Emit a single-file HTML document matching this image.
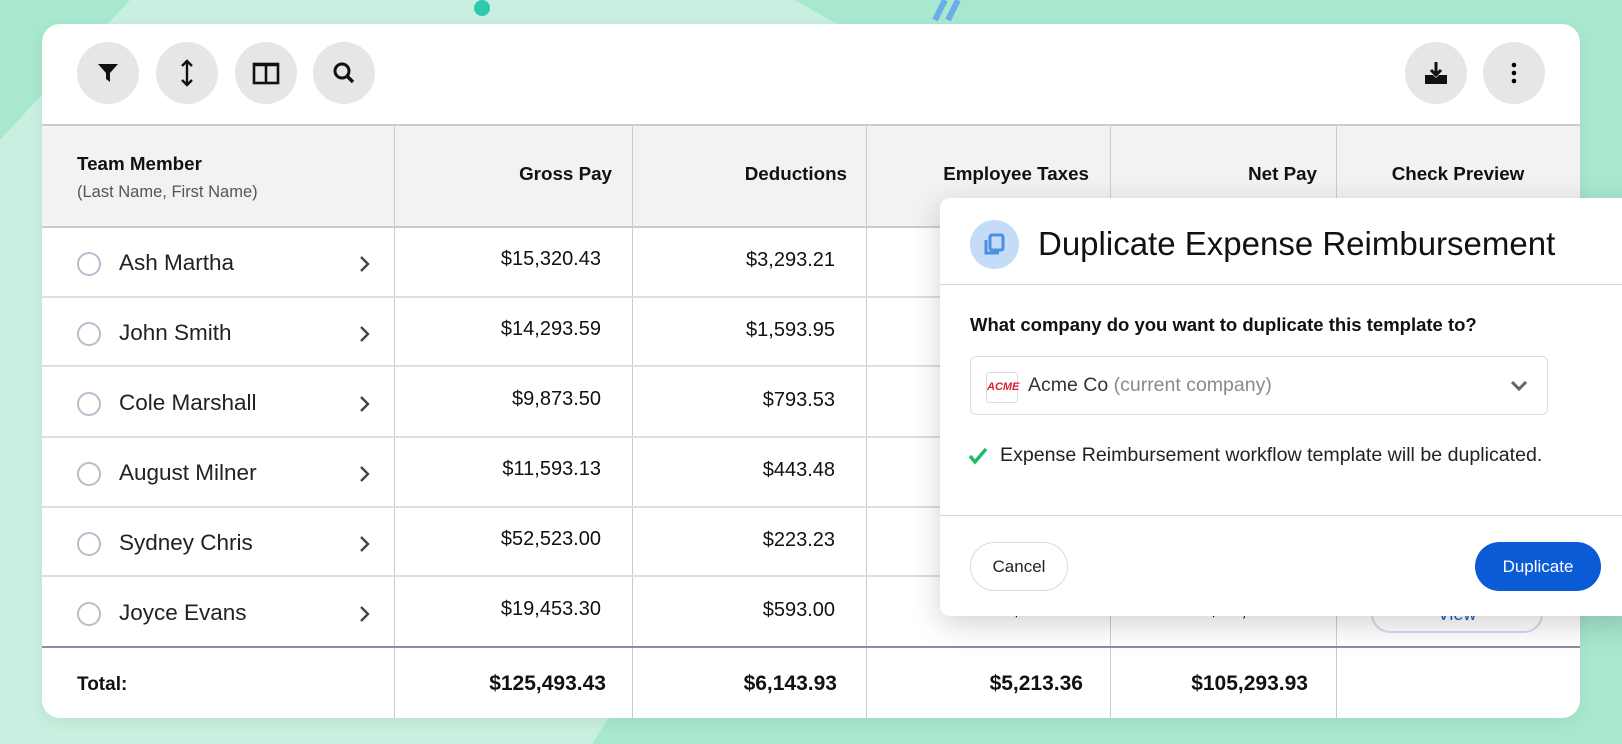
<!DOCTYPE html>
<html><head><meta charset="utf-8"><style>
*{box-sizing:border-box;margin:0;padding:0}
body{width:1622px;height:744px;overflow:hidden;position:relative;background:#a8e8cf;font-family:"Liberation Sans",sans-serif;color:#111}
.abs{position:absolute}
.card{left:42px;top:24px;width:1538px;height:694px;background:#fff;border-radius:18px;overflow:hidden;box-shadow:0 4px 16px rgba(0,0,0,.06)}
.btn{position:absolute;width:62px;height:62px;border-radius:50%;background:#e6e6e6;top:18px;display:flex;align-items:center;justify-content:center}
.hdr{left:0;top:100px;width:1538px;height:104px;background:#f2f2f3;border-top:2px solid #c9ccd6;border-bottom:2px solid #c9ccd6}
.vl{position:absolute;top:100px;width:1px;height:594px;background:#c9ccd6}
.hl{position:absolute;left:0;width:1538px;height:2px;background:#dcdee4}
.h{position:absolute;font-weight:bold;font-size:18.8px;top:139px}
.r{position:absolute;font-size:20px;text-align:right}
.name{position:absolute;left:77px;font-size:22.5px;color:#222}
.rad{position:absolute;left:35px;width:24px;height:24px;border:2px solid #b9bccb;border-radius:50%}
.chev{position:absolute;left:316px}
.tot{position:absolute;font-size:21px;font-weight:bold;top:648px}
</style></head><body>
<svg class="abs" style="left:0;top:0" width="1622" height="744">
<polygon points="130,0 795,0 900,60 620,700 592,744 0,744 0,140" fill="#c8efdf"/>
<circle cx="482" cy="8" r="8" fill="#2fc9b0"/>
<path d="M935 20 L945 0 M948 20 L958 0" stroke="#6aaee8" stroke-width="6"/>
</svg>
<div class="abs card">
 <div class="btn" style="left:35px"><svg width="24" height="24" viewBox="0 0 24 24"><path d="M2 3h20l-8 9v9l-4-3v-6z" fill="#111"/></svg></div>
 <div class="btn" style="left:114px"><svg width="24" height="28" viewBox="0 0 24 28"><path d="M12 2v24M7 7l5-5 5 5M7 21l5 5 5-5" stroke="#111" stroke-width="2.4" fill="none"/></svg></div>
 <div class="btn" style="left:193px"><svg width="28" height="24" viewBox="0 0 28 24"><rect x="2" y="3" width="24" height="19" fill="none" stroke="#111" stroke-width="2.6"/><path d="M14 3v19M2 4h24" stroke="#111" stroke-width="2.6"/></svg></div>
 <div class="btn" style="left:271px"><svg width="24" height="24" viewBox="0 0 24 24"><circle cx="10" cy="10" r="7" fill="none" stroke="#111" stroke-width="3"/><path d="M15 15l6 6" stroke="#111" stroke-width="3.4"/></svg></div>
 <div class="btn" style="left:1363px"><svg width="26" height="26" viewBox="0 0 26 26"><path d="M13 2v12M8 10l5 5 5-5" stroke="#111" stroke-width="3" fill="none"/><path d="M2 15h8l3 3 3-3h8v9H2z" fill="#111"/></svg></div>
 <div class="btn" style="left:1441px"><svg width="6" height="22"><circle cx="3" cy="3" r="2.3"/><circle cx="3" cy="11" r="2.3"/><circle cx="3" cy="19" r="2.3"/></svg></div>
 <div class="abs hdr"></div>
 <div class="vl" style="left:352px"></div><div class="vl" style="left:590px"></div><div class="vl" style="left:824px"></div><div class="vl" style="left:1068px"></div><div class="vl" style="left:1294px"></div>
 <div class="h" style="left:35px;top:129px">Team Member</div>
 <div class="abs" style="left:35px;top:159px;font-size:16.5px;color:#555">(Last Name, First Name)</div>
 <div class="h" style="right:968px">Gross Pay</div>
 <div class="h" style="right:733px">Deductions</div>
 <div class="h" style="right:491px">Employee Taxes</div>
 <div class="h" style="right:263px">Net Pay</div>
 <div class="h" style="left:1294px;width:244px;text-align:center">Check Preview</div>
 <div class="hl" style="top:272px"></div><div class="hl" style="top:341px"></div><div class="hl" style="top:412px"></div><div class="hl" style="top:482px"></div><div class="hl" style="top:551px"></div>
 <div class="hl" style="top:622px;background:#8a90a3"></div>

 <div class="rad" style="top:228px"></div><div class="name" style="top:226px">Ash Martha</div><svg class="chev" style="top:231px" width="12" height="18"><path d="M3 2l7 7-7 7" stroke="#444" stroke-width="2.4" fill="none"/></svg>
 <div class="rad" style="top:298px"></div><div class="name" style="top:296px">John Smith</div><svg class="chev" style="top:301px" width="12" height="18"><path d="M3 2l7 7-7 7" stroke="#444" stroke-width="2.4" fill="none"/></svg>
 <div class="rad" style="top:368px"></div><div class="name" style="top:366px">Cole Marshall</div><svg class="chev" style="top:371px" width="12" height="18"><path d="M3 2l7 7-7 7" stroke="#444" stroke-width="2.4" fill="none"/></svg>
 <div class="rad" style="top:438px"></div><div class="name" style="top:436px">August Milner</div><svg class="chev" style="top:441px" width="12" height="18"><path d="M3 2l7 7-7 7" stroke="#444" stroke-width="2.4" fill="none"/></svg>
 <div class="rad" style="top:508px"></div><div class="name" style="top:506px">Sydney Chris</div><svg class="chev" style="top:511px" width="12" height="18"><path d="M3 2l7 7-7 7" stroke="#444" stroke-width="2.4" fill="none"/></svg>
 <div class="rad" style="top:578px"></div><div class="name" style="top:576px">Joyce Evans</div><svg class="chev" style="top:581px" width="12" height="18"><path d="M3 2l7 7-7 7" stroke="#444" stroke-width="2.4" fill="none"/></svg>

 <div class="r" style="right:979px;top:224px">$15,320.43</div><div class="r" style="right:745px;top:225px">$3,293.21</div>
 <div class="r" style="right:979px;top:294px">$14,293.59</div><div class="r" style="right:745px;top:295px">$1,593.95</div>
 <div class="r" style="right:979px;top:364px">$9,873.50</div><div class="r" style="right:745px;top:365px">$793.53</div>
 <div class="r" style="right:979px;top:434px">$11,593.13</div><div class="r" style="right:745px;top:435px">$443.48</div>
 <div class="r" style="right:979px;top:504px">$52,523.00</div><div class="r" style="right:745px;top:505px">$223.23</div>
 <div class="r" style="right:979px;top:574px">$19,453.30</div><div class="r" style="right:745px;top:575px">$593.00</div>
 <div class="r" style="right:497px;top:575px">$592.15</div><div class="r" style="right:272px;top:575px">$16,793.73</div>
 <div class="abs" style="left:1329px;top:571px;width:172px;height:38px;border:2px solid #cfdcf0;border-radius:19px;text-align:center;color:#1a5bc9;font-size:18px;line-height:34px">View</div>

 <div class="tot" style="left:35px;font-size:19px;top:650px">Total:</div>
 <div class="tot" style="right:974px">$125,493.43</div>
 <div class="tot" style="right:743px">$6,143.93</div>
 <div class="tot" style="right:497px">$5,213.36</div>
 <div class="tot" style="right:272px">$105,293.93</div>
</div>

<div class="abs" style="left:940px;top:198px;width:700px;height:418px;background:#fff;border-radius:10px;box-shadow:0 8px 30px rgba(0,0,0,.18)">
 <div class="abs" style="left:30px;top:22px;width:49px;height:49px;border-radius:50%;background:#c4dcf7"></div>
 <svg class="abs" style="left:40px;top:32px" width="30" height="30" viewBox="0 0 30 30"><rect x="10" y="5" width="13" height="15" rx="2" fill="none" stroke="#4b8fe0" stroke-width="3"/><path d="M6 10v13h13" fill="none" stroke="#4b8fe0" stroke-width="3"/></svg>
 <div class="abs" style="left:98px;top:27px;font-size:33px;color:#111">Duplicate Expense Reimbursement</div>
 <div class="abs" style="left:0;top:86px;width:700px;height:1px;background:#cdd0d6"></div>
 <div class="abs" style="left:30px;top:116px;font-size:18.5px;font-weight:bold;color:#111">What company do you want to duplicate this template to?</div>
 <div class="abs" style="left:30px;top:158px;width:578px;height:59px;border:1px solid #dcdee3;border-radius:6px"></div>
 <div class="abs" style="left:46px;top:174px;width:32px;height:31px;border:1px solid #ddd;border-radius:3px;color:#d23;font-size:11px;font-weight:bold;font-style:italic;text-align:center;line-height:29px">ACME</div>
 <div class="abs" style="left:88px;top:176px;font-size:19.5px;color:#333">Acme Co <span style="color:#8a8a8a">(current company)</span></div>
 <svg class="abs" style="left:570px;top:182px" width="18" height="12"><path d="M2 2l7 7 7-7" stroke="#666" stroke-width="3" fill="none"/></svg>
 <svg class="abs" style="left:28px;top:249px" width="20" height="18"><path d="M2 9l5 6 11-13" stroke="#1dba6a" stroke-width="3.4" fill="none"/></svg>
 <div class="abs" style="left:60px;top:246px;font-size:19.6px;color:#222">Expense Reimbursement workflow template will be duplicated.</div>
 <div class="abs" style="left:0;top:317px;width:700px;height:1px;background:#cdd0d6"></div>
 <div class="abs" style="left:30px;top:344px;width:98px;height:49px;border:1px solid #d8dade;border-radius:25px;text-align:center;line-height:47px;font-size:17px;color:#222">Cancel</div>
 <div class="abs" style="left:535px;top:344px;width:126px;height:49px;background:#0b5bd7;border-radius:25px;text-align:center;line-height:49px;font-size:17px;color:#fff">Duplicate</div>
</div>
</body></html>
